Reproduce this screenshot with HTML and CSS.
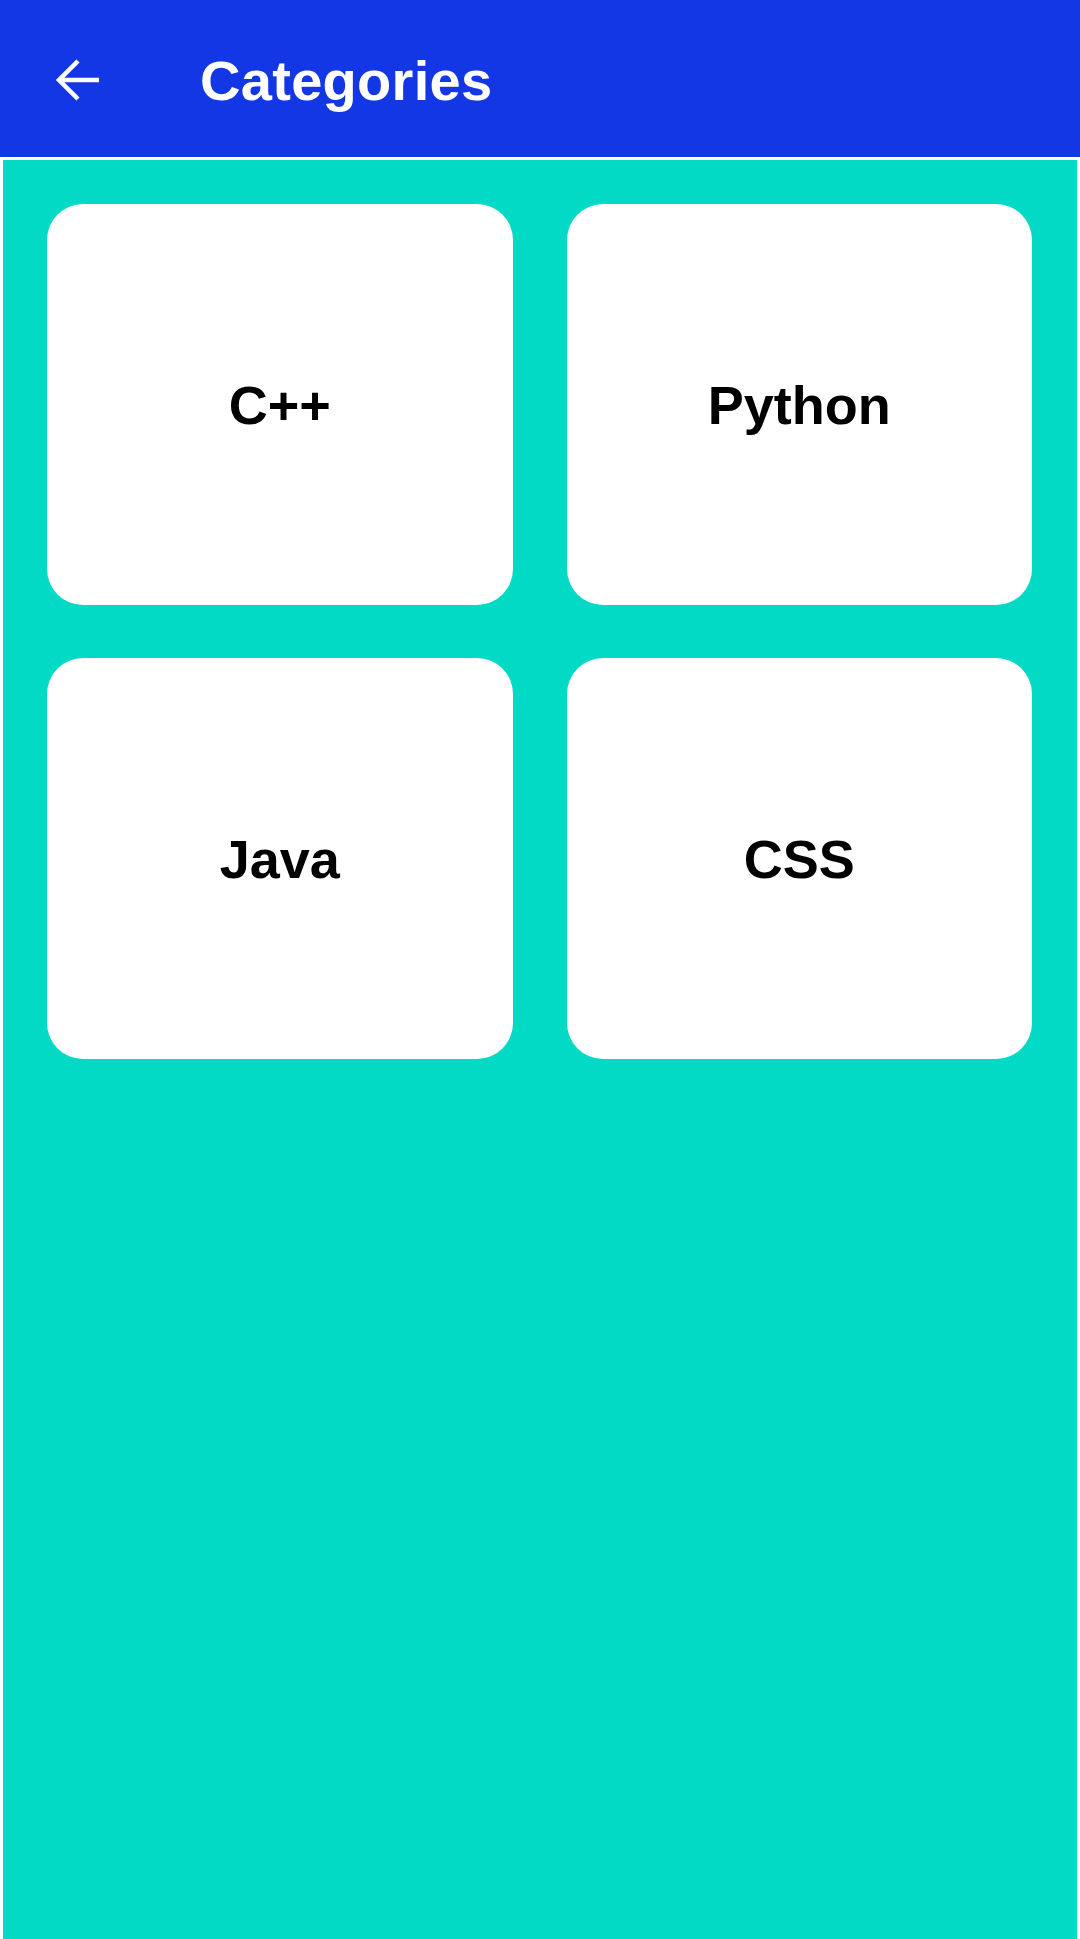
FILE: index.html
```html
<!DOCTYPE html>
<html lang="en">
<head>
    <meta charset="UTF-8">
    <meta name="viewport" content="width=device-width, initial-scale=1.0">
    <title>Categories</title>
    <link rel="stylesheet" href="styles.css">
</head>
<body>
    <header class="app-bar">
        <button class="back-btn" aria-label="Back">
            <svg width="46" height="44" viewBox="0 0 46 44">
                <path d="M45 22 H5 M24 3 L5 22 L24 41" fill="none" stroke="#fff" stroke-width="4.5"/>
            </svg>
        </button>
        <h1 class="title">Categories</h1>
    </header>
    <main class="content">
        <div class="grid">
            <div class="card">C++</div>
            <div class="card">Python</div>
            <div class="card">Java</div>
            <div class="card">CSS</div>
        </div>
    </main>
</body>
</html>
```

FILE: styles.css
```css
html, body {
    margin: 0;
    height: 100%;
}

body {
    background-color: #fff;
    font-family: "Liberation Sans", Arial, sans-serif;
    display: flex;
    flex-direction: column;
}

.app-bar {
    height: 157px;
    background-color: #1437e6;
    display: flex;
    align-items: center;
    padding-left: 54px;
    box-sizing: border-box;
    flex-shrink: 0;
}

.back-btn {
    width: 46px;
    height: 44px;
    padding: 0;
    border: none;
    background: none;
    display: flex;
    margin-top: 2px;
}

.title {
    margin: 4px 0 0 100px;
    color: #fff;
    font-size: 56px;
    font-weight: bold;
    letter-spacing: 0.3px;
}

.content {
    flex: 1;
    margin: 3px 3px 0;
    background-color: #03dac5;
    padding: 44px 45px 44px 44px;
}

.grid {
    display: grid;
    grid-template-columns: repeat(2, 1fr);
    column-gap: 54px;
    row-gap: 53px;
}

.card {
    height: 401px;
    background-color: #fff;
    border-radius: 36px;
    display: flex;
    justify-content: center;
    align-items: center;
    font-size: 54px;
    font-weight: bold;
    color: #000;
}
```
